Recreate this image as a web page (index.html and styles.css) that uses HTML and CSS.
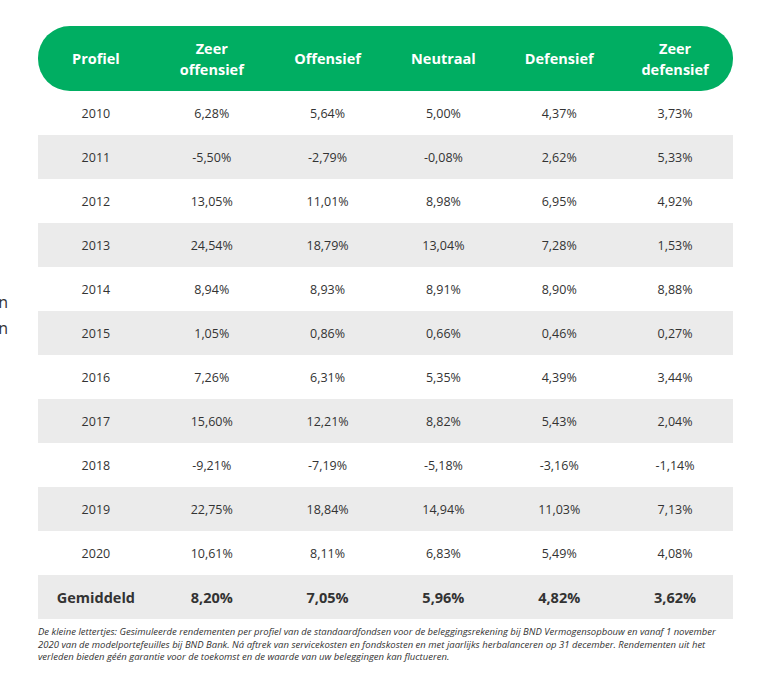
FILE: index.html
```html
<!DOCTYPE html>
<html lang="nl">
<head>
<meta charset="utf-8">
<link rel="stylesheet" href="styles.css">
</head>
<body>
<div class="page">
  <div class="side">
    <div class="side-text">bekijken van de rendementen<br>in de afgelopen jaren en</div>
  </div>
  <div class="main">
    <table class="returns">
      <thead>
        <tr>
          <th>Profiel</th>
          <th>Zeer<br>offensief</th>
          <th>Offensief</th>
          <th>Neutraal</th>
          <th>Defensief</th>
          <th>Zeer<br>defensief</th>
        </tr>
      </thead>
      <tbody>
        <tr><td>2010</td><td>6,28%</td><td>5,64%</td><td>5,00%</td><td>4,37%</td><td>3,73%</td></tr>
        <tr><td>2011</td><td>-5,50%</td><td>-2,79%</td><td>-0,08%</td><td>2,62%</td><td>5,33%</td></tr>
        <tr><td>2012</td><td>13,05%</td><td>11,01%</td><td>8,98%</td><td>6,95%</td><td>4,92%</td></tr>
        <tr><td>2013</td><td>24,54%</td><td>18,79%</td><td>13,04%</td><td>7,28%</td><td>1,53%</td></tr>
        <tr><td>2014</td><td>8,94%</td><td>8,93%</td><td>8,91%</td><td>8,90%</td><td>8,88%</td></tr>
        <tr><td>2015</td><td>1,05%</td><td>0,86%</td><td>0,66%</td><td>0,46%</td><td>0,27%</td></tr>
        <tr><td>2016</td><td>7,26%</td><td>6,31%</td><td>5,35%</td><td>4,39%</td><td>3,44%</td></tr>
        <tr><td>2017</td><td>15,60%</td><td>12,21%</td><td>8,82%</td><td>5,43%</td><td>2,04%</td></tr>
        <tr><td>2018</td><td>-9,21%</td><td>-7,19%</td><td>-5,18%</td><td>-3,16%</td><td>-1,14%</td></tr>
        <tr><td>2019</td><td>22,75%</td><td>18,84%</td><td>14,94%</td><td>11,03%</td><td>7,13%</td></tr>
        <tr><td>2020</td><td>10,61%</td><td>8,11%</td><td>6,83%</td><td>5,49%</td><td>4,08%</td></tr>
        <tr class="avg"><td>Gemiddeld</td><td>8,20%</td><td>7,05%</td><td>5,96%</td><td>4,82%</td><td>3,62%</td></tr>
      </tbody>
    </table>
    <p class="note">De kleine lettertjes: Gesimuleerde rendementen per profiel van de standaardfondsen voor de beleggingsrekening bij BND Vermogensopbouw en vanaf 1 november 2020 van de modelportefeuilles bij BND Bank. Ná aftrek van servicekosten en fondskosten en met jaarlijks herbalanceren op 31 december. Rendementen uit het verleden bieden géén garantie voor de toekomst en de waarde van uw beleggingen kan fluctueren.</p>
  </div>
</div>
</body>
</html>
```
FILE: styles.css
```css
html, body {
  margin: 0;
  padding: 0;
  background: #ffffff;
}
body {
  font-family: "Open Sans", Lato, "Liberation Sans", sans-serif;
  color: #333333;
}
.page {
  display: flex;
  gap: 30px;
  padding-top: 26px;
}
.side {
  flex: 0 0 8px;
  overflow: hidden;
  display: flex;
  justify-content: flex-end;
  padding-top: 263px;
}
.side-text {
  flex: 0 0 auto;
  width: 260px;
  text-align: right;
  font-size: 16px;
  line-height: 26px;
  color: #333333;
}
.main {
  width: 695px;
}
.returns {
  width: 695px;
  border-collapse: separate;
  border-spacing: 0;
  table-layout: fixed;
}
.returns th {
  background: #00ae62;
  color: #ffffff;
  font-weight: 700;
  font-size: 14.5px;
  line-height: 21px;
  height: 65px;
  padding: 0;
  text-align: center;
  vertical-align: middle;
}
.returns th:first-child {
  border-radius: 32px 0 0 32px;
}
.returns th:last-child {
  border-radius: 0 32px 32px 0;
}
.returns td {
  height: 44px;
  padding: 0;
  text-align: center;
  vertical-align: middle;
  font-size: 12.5px;
  color: #333333;
}
.returns tbody tr:nth-child(even) td {
  background: #ebebeb;
}
.returns tr.avg td {
  font-weight: 700;
  font-size: 14.5px;
}
.note {
  margin: 7px 0 0 0;
  width: 690px;
  font-size: 9.5px;
  line-height: 12.5px;
  font-style: italic;
  color: #333333;
}
```
